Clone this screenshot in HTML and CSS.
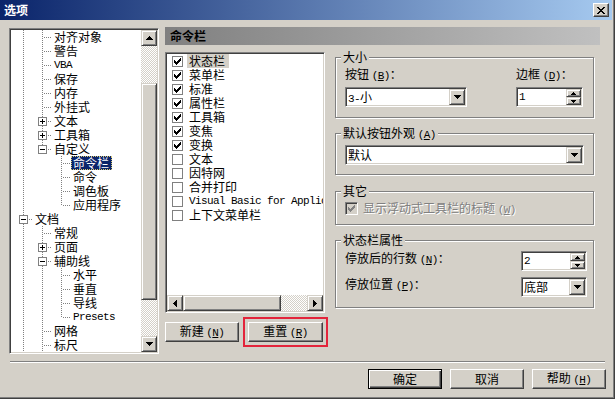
FILE: index.html
```html
<!DOCTYPE html>
<html lang="zh-CN">
<head>
  <meta charset="UTF-8">
  <title>选项</title>
  <link rel="stylesheet" href="styles.css">
</head>
<body>
  <svg class="defs" width="0" height="0">
    <symbol id="chk" viewBox="0 0 9 9"><path d="M1 3h1v3H1z M2 4h1v3H2z M3 5h1v3H3z M4 4h1v3H4z M5 3h1v3H5z M6 2h1v3H6z M7 1h1v3H7z"/></symbol>
    <symbol id="up" viewBox="0 0 7 4"><path d="M3 0h1v1h1v1h1v1h1v1H0V3h1V2h1V1h1z"/></symbol>
    <symbol id="down" viewBox="0 0 7 4"><path d="M0 0h7v1H6v1H5v1H4v1H3V3H2V2H1V1H0z"/></symbol>
    <symbol id="left" viewBox="0 0 4 7"><path d="M3 0h1v7H3V6H2V5H1V4H0V3h1V2h1V1h1z"/></symbol>
    <symbol id="right" viewBox="0 0 4 7"><path d="M0 0h1v1h1v1h1v1h1v1H3v1H2v1H1v1H0z"/></symbol>
    <symbol id="sup" viewBox="0 0 5 3"><path d="M2 0h1v1h1v1h1v1H0V2h1V1h1z"/></symbol>
    <symbol id="sdown" viewBox="0 0 5 3"><path d="M0 0h5v1H4v1H3v1H2V2H1V1H0z"/></symbol>
    <symbol id="x" viewBox="0 0 8 7"><path d="M0 0h2v1H0z M6 0h2v1H6z M1 1h2v1H1z M5 1h2v1H5z M2 2h4v1H2z M3 3h2v1H3z M2 4h4v1H2z M1 5h2v1H1z M5 5h2v1H5z M0 6h2v1H0z M6 6h2v1H6z"/></symbol>
  </svg>

  <div class="window">
    <div class="titlebar">
      <span class="title">选项</span>
      <span class="close"><svg class="ico8"><use href="#x"/></svg></span>
    </div>

    <div class="content">
      <!-- arbol de opciones -->
      <div class="tree">
        <div class="tree-items">
          <div class="row"><i class="g v"></i><i class="g t"></i><span class="lbl">对齐对象</span></div>
          <div class="row"><i class="g v"></i><i class="g t"></i><span class="lbl">警告</span></div>
          <div class="row"><i class="g v"></i><i class="g t"></i><span class="lbl m">VBA</span></div>
          <div class="row"><i class="g v"></i><i class="g t"></i><span class="lbl">保存</span></div>
          <div class="row"><i class="g v"></i><i class="g t"></i><span class="lbl">内存</span></div>
          <div class="row"><i class="g v"></i><i class="g t"></i><span class="lbl">外挂式</span></div>
          <div class="row"><i class="g v"></i><i class="g t"><b class="exp plus"></b></i><span class="lbl">文本</span></div>
          <div class="row"><i class="g v"></i><i class="g t"><b class="exp plus"></b></i><span class="lbl">工具箱</span></div>
          <div class="row"><i class="g v"></i><i class="g l"><b class="exp"></b></i><span class="lbl">自定义</span></div>
          <div class="row"><i class="g v"></i><i class="g"></i><i class="g t"></i><span class="lbl sel">命令栏</span></div>
          <div class="row"><i class="g v"></i><i class="g"></i><i class="g t"></i><span class="lbl">命令</span></div>
          <div class="row"><i class="g v"></i><i class="g"></i><i class="g t"></i><span class="lbl">调色板</span></div>
          <div class="row"><i class="g v"></i><i class="g"></i><i class="g l"></i><span class="lbl">应用程序</span></div>
          <div class="row"><i class="g t"><b class="exp"></b></i><span class="lbl">文档</span></div>
          <div class="row"><i class="g v"></i><i class="g t"></i><span class="lbl">常规</span></div>
          <div class="row"><i class="g v"></i><i class="g t"><b class="exp plus"></b></i><span class="lbl">页面</span></div>
          <div class="row"><i class="g v"></i><i class="g t"><b class="exp"></b></i><span class="lbl">辅助线</span></div>
          <div class="row"><i class="g v"></i><i class="g v"></i><i class="g t"></i><span class="lbl">水平</span></div>
          <div class="row"><i class="g v"></i><i class="g v"></i><i class="g t"></i><span class="lbl">垂直</span></div>
          <div class="row"><i class="g v"></i><i class="g v"></i><i class="g t"></i><span class="lbl">导线</span></div>
          <div class="row"><i class="g v"></i><i class="g v"></i><i class="g l"></i><span class="lbl m">Presets</span></div>
          <div class="row"><i class="g v"></i><i class="g t"></i><span class="lbl">网格</span></div>
          <div class="row"><i class="g v"></i><i class="g t"></i><span class="lbl">标尺</span></div>
        </div>
        <div class="vscroll">
          <span class="sbtn"><svg class="ar74"><use href="#up"/></svg></span>
          <div class="track"><div class="thumb"></div></div>
          <span class="sbtn"><svg class="ar74"><use href="#down"/></svg></span>
        </div>
      </div>

      <div class="main">
        <div class="header">命令栏</div>
        <div class="panes">
          <div class="list-col">
            <div class="list">
              <div class="list-items">
                <div class="item"><span class="cb"><svg class="ico9"><use href="#chk"/></svg></span><span class="txt cur">状态栏</span></div>
                <div class="item"><span class="cb"><svg class="ico9"><use href="#chk"/></svg></span><span class="txt">菜单栏</span></div>
                <div class="item"><span class="cb"><svg class="ico9"><use href="#chk"/></svg></span><span class="txt">标准</span></div>
                <div class="item"><span class="cb"><svg class="ico9"><use href="#chk"/></svg></span><span class="txt">属性栏</span></div>
                <div class="item"><span class="cb"><svg class="ico9"><use href="#chk"/></svg></span><span class="txt">工具箱</span></div>
                <div class="item"><span class="cb"><svg class="ico9"><use href="#chk"/></svg></span><span class="txt">变焦</span></div>
                <div class="item"><span class="cb"><svg class="ico9"><use href="#chk"/></svg></span><span class="txt">变换</span></div>
                <div class="item"><span class="cb"></span><span class="txt">文本</span></div>
                <div class="item"><span class="cb"></span><span class="txt">因特网</span></div>
                <div class="item"><span class="cb"></span><span class="txt">合并打印</span></div>
                <div class="item"><span class="cb"></span><span class="txt m">Visual Basic for Applications</span></div>
                <div class="item"><span class="cb"></span><span class="txt">上下文菜单栏</span></div>
              </div>
              <div class="hscroll">
                <span class="sbtn"><svg class="ar47"><use href="#left"/></svg></span>
                <div class="hthumb"></div>
                <div class="htrack"></div>
                <span class="sbtn"><svg class="ar47"><use href="#right"/></svg></span>
              </div>
            </div>
            <div class="list-btns">
              <button class="btn w74">新建 <span class="m">(<u>N</u>)</span></button>
              <button class="btn w75 marked">重置 <span class="m">(<u>R</u>)</span></button>
            </div>
          </div>

          <div class="side">
            <div class="group">
              <div class="legend">大小</div>
              <div class="split pr10">
                <div>
                  <div class="flbl">按钮 <span class="m">(<u>B</u>)</span>：</div>
                  <div class="combo w122"><span class="val"><span class="m">3-</span>小</span><span class="drop"><svg class="ar74"><use href="#down"/></svg></span></div>
                </div>
                <div>
                  <div class="flbl">边框 <span class="m">(<u>D</u>)</span>：</div>
                  <div class="combo w67"><span class="val m">1</span><span class="spin"><span class="sb"><svg class="ar53"><use href="#sup"/></svg></span><span class="sb"><svg class="ar53"><use href="#sdown"/></svg></span></span></div>
                </div>
              </div>
            </div>

            <div class="group g2">
              <div class="legend">默认按钮外观 <span class="m">(<u>A</u>)</span></div>
              <div class="combo w239 mt3"><span class="val">默认</span><span class="drop"><svg class="ar74"><use href="#down"/></svg></span></div>
            </div>

            <div class="group g3">
              <div class="legend">其它</div>
              <div class="check-row">
                <span class="cb13"><svg class="ico9"><use href="#chk"/></svg></span>
                <span class="disabled">显示浮动式工具栏的标题 <span class="m">(<u>W</u>)</span></span>
              </div>
            </div>

            <div class="group g4">
              <div class="legend">状态栏属性</div>
              <div class="split pr6 mt4">
                <span>停放后的行数 <span class="m">(<u>N</u>)</span>：</span>
                <div class="combo w66"><span class="val m">2</span><span class="spin"><span class="sb"><svg class="ar53"><use href="#sup"/></svg></span><span class="sb"><svg class="ar53"><use href="#sdown"/></svg></span></span></div>
              </div>
              <div class="split pr6 mt6">
                <span>停放位置 <span class="m">(<u>P</u>)</span>：</span>
                <div class="combo w66"><span class="val">底部</span><span class="drop"><svg class="ar74"><use href="#down"/></svg></span></div>
              </div>
            </div>
          </div>
        </div>
      </div>
    </div>

    <div class="sep"></div>

    <div class="footer">
      <button class="btn w74 default">确定</button>
      <button class="btn w74">取消</button>
      <button class="btn w74">帮助 <span class="m">(<u>H</u>)</span></button>
    </div>
  </div>
</body>
</html>
```

FILE: styles.css
```css
body {
  margin: 0;
  font-family: "Noto Sans CJK SC", "Liberation Sans", sans-serif;
  font-size: 12px;
  line-height: 14px;
  color: #000;
}

.defs {
  display: block;
  width: 0;
  height: 0;
}

svg {
  display: block;
  fill: currentColor;
  shape-rendering: crispEdges;
}

.ico8 { width: 8px; height: 7px; }
.ico9 { width: 9px; height: 9px; }
.ar74 { width: 7px; height: 4px; }
.ar47 { width: 4px; height: 7px; }
.ar53 { width: 5px; height: 3px; }

.m {
  font-family: "Liberation Mono", monospace;
  font-size: 11px;
  letter-spacing: -0.6px;
}

.window {
  width: 615px;
  height: 399px;
  box-sizing: border-box;
  padding: 0 3px 3px 0;
  background: #d4d0c8;
  box-shadow: inset -1px -1px #404040, inset -2px -2px #808080;
}

/* barra de titulo */
.titlebar {
  height: 20px;
  display: flex;
  align-items: center;
  padding: 0 3px 0 4px;
  background: linear-gradient(to right, #0a246a, #a6caf0);
}

.title {
  flex: 1;
  color: #fff;
  font-weight: bold;
}

.close {
  width: 16px;
  height: 14px;
  box-sizing: border-box;
  display: flex;
  align-items: center;
  justify-content: center;
  background: #d4d0c8;
  border: 1px solid;
  border-color: #fff #404040 #404040 #fff;
  box-shadow: inset -1px -1px #808080;
}

/* bordes 3D */
.tree, .list, .combo, .cb13 {
  box-sizing: border-box;
  border: 1px solid;
  border-color: #808080 #fff #fff #808080;
  box-shadow: inset 1px 1px #404040, inset -1px -1px #d4d0c8;
  padding: 1px;
}

.sbtn, .thumb, .hthumb, .drop, .sb {
  box-sizing: border-box;
  background: #d4d0c8;
  border: 1px solid;
  border-color: #d4d0c8 #404040 #404040 #d4d0c8;
  box-shadow: inset 1px 1px #fff, inset -1px -1px #808080;
  display: flex;
  align-items: center;
  justify-content: center;
}

.btn {
  height: 20px;
  box-sizing: border-box;
  padding: 0;
  font: inherit;
  background: #d4d0c8;
  border: 1px solid;
  border-color: #fff #404040 #404040 #fff;
  box-shadow: inset -1px -1px #808080;
}

.btn.default {
  border-color: #000;
  box-shadow: inset 1px 1px #fff, inset -1px -1px #404040, inset -2px -2px #808080;
}

.btn.marked {
  outline: 2px solid #e3243b;
  outline-offset: 3px;
}

.w74 { width: 74px; }
.w75 { width: 75px; }

.content {
  display: flex;
  gap: 6px;
  padding: 7px 0 0 9px;
}

/* arbol */
.tree {
  margin-top: 1px;
  width: 150px;
  height: 326px;
  display: flex;
  background: #fff;
}

.tree-items {
  flex: 1;
  overflow: hidden;
  padding-left: 3px;
}

.row {
  display: flex;
  height: 14px;
  white-space: nowrap;
}

.g {
  width: 19px;
  height: 14px;
  flex: none;
  display: flex;
  justify-content: center;
  align-items: flex-start;
  background-repeat: no-repeat;
}

.g.v {
  background-image: repeating-linear-gradient(to bottom, #808080 0 1px, transparent 1px 2px);
  background-position: 9px 0;
  background-size: 1px 14px;
}

.g.t {
  background-image:
    repeating-linear-gradient(to bottom, #808080 0 1px, transparent 1px 2px),
    repeating-linear-gradient(to right, #808080 0 1px, transparent 1px 2px);
  background-position: 9px 0, 11px 7px;
  background-size: 1px 14px, 8px 1px;
}

.g.l {
  background-image:
    repeating-linear-gradient(to bottom, #808080 0 1px, transparent 1px 2px),
    repeating-linear-gradient(to right, #808080 0 1px, transparent 1px 2px);
  background-position: 9px 0, 11px 7px;
  background-size: 1px 8px, 8px 1px;
}

.exp {
  margin-top: 3px;
  width: 9px;
  height: 9px;
  box-sizing: border-box;
  border: 1px solid #808080;
  background: linear-gradient(#000, #000) center / 5px 1px no-repeat, #fff;
}

.exp.plus {
  background:
    linear-gradient(#000, #000) center / 5px 1px no-repeat,
    linear-gradient(#000, #000) center / 1px 5px no-repeat,
    #fff;
}

.lbl {
  padding: 0 3px 0 2px;
  height: 14px;
  box-sizing: border-box;
}

.lbl.sel {
  background: #0a246a;
  color: #fff;
  outline: 1px dotted #d8c870;
  outline-offset: -1px;
}

.vscroll {
  width: 16px;
  display: flex;
  flex-direction: column;
}

.vscroll .sbtn {
  height: 16px;
}

.track, .htrack {
  flex: 1;
  background: repeating-conic-gradient(#fff 0 25%, #d4d0c8 0 50%) 0 0 / 2px 2px;
}

.thumb {
  margin-top: 37px;
  height: 217px;
}

/* panel principal */
.main {
  width: 435px;
  display: flex;
  flex-direction: column;
}

.header {
  height: 18px;
  display: flex;
  align-items: center;
  padding-left: 5px;
  font-weight: bold;
  background: linear-gradient(to right, #808080, #c0c0c0);
}

.panes {
  display: flex;
  gap: 10px;
  margin-top: 7px;
}

.list-col {
  width: 160px;
}

.list {
  height: 261px;
  display: flex;
  flex-direction: column;
  background: #fff;
}

.list-items {
  flex: 1;
  overflow: hidden;
  padding-left: 5px;
}

.item {
  display: flex;
  align-items: center;
  height: 14px;
  white-space: nowrap;
}

.cb {
  width: 11px;
  height: 11px;
  flex: none;
  box-sizing: border-box;
  border: 1px solid #808080;
  background: #fff;
  margin-right: 4px;
}

.txt {
  padding: 0 4px 0 2px;
  height: 14px;
}

.txt.cur {
  background: #d4d0c8;
}

.hscroll {
  height: 16px;
  display: flex;
}

.hscroll .sbtn {
  width: 16px;
}

.hthumb {
  width: 98px;
}

.list-btns {
  display: flex;
  gap: 9px;
  margin-top: 9px;
}

/* grupos de la derecha */
.side {
  width: 259px;
  padding-top: 5px;
}

.group {
  border: 1px solid #808080;
  box-shadow: inset 1px 1px #fff, 1px 1px #fff;
  padding: 0 0 10px 9px;
}

.g2 { margin-top: 15px; padding-bottom: 9px; }
.g3 { margin-top: 16px; padding-bottom: 9px; }
.g4 { margin-top: 15px; }

.legend {
  width: fit-content;
  margin: -8px 0 0 -4px;
  padding: 0 2px;
  background: #d4d0c8;
}

.split {
  display: flex;
  justify-content: space-between;
  align-items: flex-start;
}

.pr10 { padding-right: 10px; }
.pr6 { padding-right: 6px; }
.mt3 { margin-top: 3px; }
.mt4 { margin-top: 4px; }
.mt6 { margin-top: 6px; }

.flbl {
  margin-top: 3px;
  margin-bottom: 4px;
}

.combo {
  height: 20px;
  display: flex;
  background: #fff;
}

.w122 { width: 122px; }
.w67 { width: 67px; }
.w66 { width: 66px; }
.w239 { width: 239px; }

.val {
  flex: 1;
  padding-left: 1px;
  line-height: 16px;
  white-space: nowrap;
}

.drop {
  width: 16px;
  height: 16px;
}

.spin {
  width: 15px;
  display: flex;
  flex-direction: column;
}

.sb {
  flex: 1;
}

.check-row {
  display: flex;
  align-items: center;
  gap: 5px;
  margin-top: 4px;
  height: 13px;
}

.cb13 {
  width: 13px;
  height: 13px;
  background: #d4d0c8;
  color: #808080;
}

.disabled {
  color: #808080;
  text-shadow: 1px 1px #fff;
}

/* pie */
.sep {
  margin: 7px 7px 0 10px;
  border-top: 1px solid #808080;
  border-bottom: 1px solid #fff;
}

.footer {
  display: flex;
  justify-content: flex-end;
  gap: 8px;
  padding-right: 6px;
  margin-top: 6px;
}
```
